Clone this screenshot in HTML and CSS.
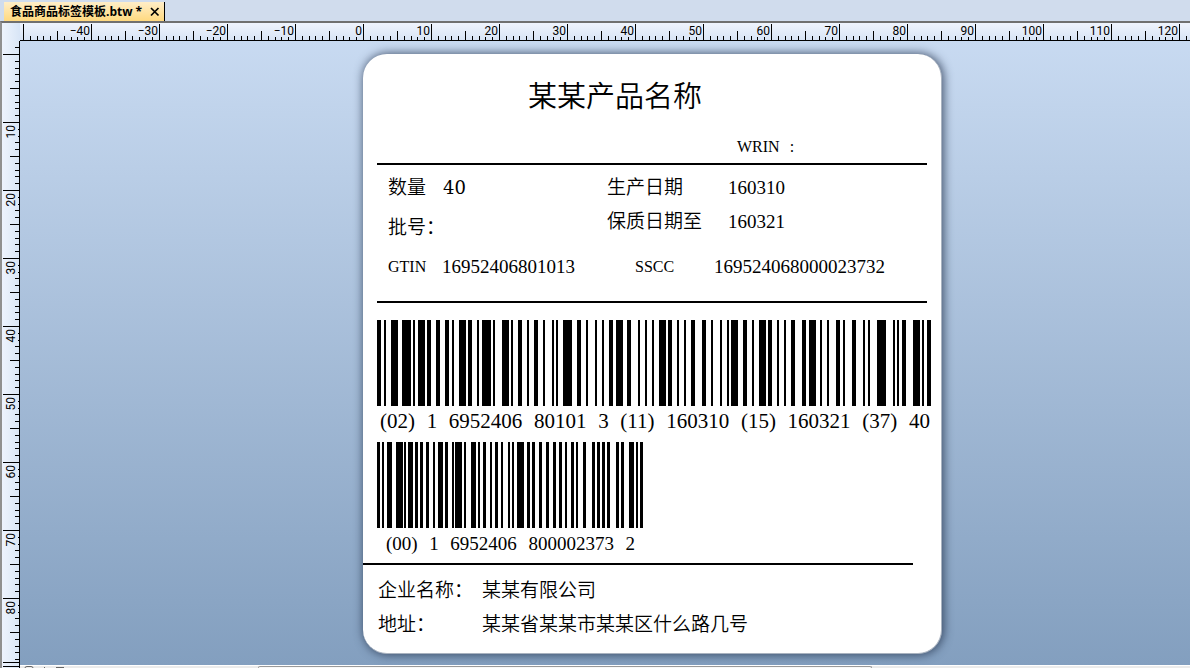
FILE: index.html
```html
<!DOCTYPE html>
<html lang="zh-CN">
<head>
<meta charset="utf-8">
<title>食品商品标签模板.btw</title>
<link rel="stylesheet" href="styles.css">
</head>
<body>
<div class="app">
  <header class="tabs">
    <div class="tab">
      <span class="tab-name">食品商品标签模板.btw *</span>
      <button class="tab-close" type="button" aria-label="关闭">
        <svg width="10" height="10" viewBox="0 0 10 10"><path d="M1 1 8.5 8.5M8.5 1 1 8.5" stroke="#000" stroke-width="1.7" fill="none"/></svg>
      </button>
    </div>
  </header>
  <main class="workspace">
    <div class="corner"></div>
    <svg class="ruler ruler-x" id="ruler-x" aria-hidden="true"></svg>
    <svg class="ruler ruler-y" id="ruler-y" aria-hidden="true"></svg>
    <div class="canvas">
      <article class="label">
        <h1 class="title">某某产品名称</h1>
        <p class="wrin"><span>WRIN</span><span>:</span></p>
        <hr class="rule">
        <div class="details">
          <dl class="fields fields-left">
            <div class="field"><dt>数量</dt><dd class="quantity">40</dd></div>
            <div class="field"><dt>批号：</dt><dd></dd></div>
          </dl>
          <dl class="fields fields-right">
            <div class="field"><dt>生产日期</dt><dd>160310</dd></div>
            <div class="field"><dt>保质日期至</dt><dd>160321</dd></div>
          </dl>
        </div>
        <dl class="codes">
          <div class="field gtin"><dt>GTIN</dt><dd>16952406801013</dd></div>
          <div class="field sscc"><dt>SSCC</dt><dd>169524068000023732</dd></div>
        </dl>
        <hr class="rule">
        <svg class="barcode barcode-item" data-code="021695240680101311160310151603213740" data-module="2.272" role="img" aria-label="GS1-128"></svg>
        <p class="readable readable-item"><span>(02)</span><span>1</span><span>6952406</span><span>80101</span><span>3</span><span>(11)</span><span>160310</span><span>(15)</span><span>160321</span><span>(37)</span><span>40</span></p>
        <svg class="barcode barcode-pallet" data-code="00169524068000023732" data-module="1.705" role="img" aria-label="GS1-128"></svg>
        <p class="readable readable-pallet"><span>(00)</span><span>1</span><span>6952406</span><span>800002373</span><span>2</span></p>
        <hr class="rule rule-wide">
        <dl class="company">
          <div class="field"><dt>企业名称：</dt><dd>某某有限公司</dd></div>
          <div class="field"><dt>地址：</dt><dd>某某省某某市某某区什么路几号</dd></div>
        </dl>
      </article>
    </div>
    <footer class="status">
      <svg class="status-icon" width="50" height="3" viewBox="0 0 50 3"><path d="M5 2Q5 .5 7 .5H11Q13 .5 13 2M24 1.5h1M36 1.5h8" fill="none" stroke="#666"/></svg>
      <div class="scroll-thumb"></div>
    </footer>
  </main>
</div>
<script src="script.js"></script>
</body>
</html>
```

FILE: styles.css
```css
* { box-sizing: border-box; }

body {
  margin: 0;
  background: #d0dced;
  color: #000;
  font-family: "Liberation Serif", "Noto Sans CJK SC", serif;
}

h1, p, dl, dd { margin: 0; }

.app {
  display: flex;
  flex-direction: column;
  min-height: 100vh;
  overflow: hidden;
}

.tabs {
  display: flex;
  height: 21px;
  padding: 2px 0 0 4px;
}

.tab {
  display: flex;
  align-items: center;
  gap: 8px;
  padding: 0 4px 0 6px;
  border-right: 1px solid #000;
  background: linear-gradient(#ffeec8, #ffd97f);
  font: bold 12px/18px "Open Sans", "Noto Sans CJK SC", sans-serif;
}

.tab-name { white-space: nowrap; }

.tab-close {
  display: flex;
  padding: 0;
  border: 0;
  background: none;
}

.workspace {
  flex: 1;
  display: grid;
  grid-template-columns: 18px minmax(0, 1fr);
  grid-template-rows: 18px minmax(0, 1fr) 3px;
  border-top: 2px solid #707070;
  border-left: 2px solid #909090;
}

.corner { background: linear-gradient(90deg, #eef4fd, #d8e5f6); }

.ruler {
  display: block;
  font: 12px Roboto, sans-serif;
}

.ruler-x {
  width: 100%;
  height: 18px;
  border-bottom: 1px solid #000;
  background: linear-gradient(#eff4fd, #d8e4f5);
}

.ruler-y {
  grid-row: 2 / 4;
  width: 18px;
  height: 100%;
  border-right: 1px solid #000;
  background: linear-gradient(90deg, #edf3fe, #dbe7f5);
}

.canvas {
  padding: 13px 0 11px 343px;
  background: linear-gradient(#c8daf1, #839fbf);
}

.label {
  width: 579px;
  padding: 23px 0 16px;
  border-right: 1px solid #a9b3c0;
  border-bottom: 1px solid #a9b3c0;
  border-radius: 24px;
  background: #fff;
  box-shadow: 1px 0 10px 1px rgba(35, 50, 75, 0.75);
  font-size: 19px;
  line-height: 24px;
}

.title {
  padding-left: 165px;
  font-size: 29px;
  font-weight: 350;
  line-height: 40px;
}

.wrin {
  display: flex;
  gap: 10px;
  margin: 18px 0 4px 374px;
  font-size: 16px;
}

.rule {
  width: 550px;
  height: 2px;
  margin: 0 0 0 14px;
  border: 0;
  background: #000;
}

.rule-wide { margin: 7px 0 0; }

.details {
  display: grid;
  grid-template-columns: 219px 1fr;
  padding: 11px 0 0 25px;
}

.field { display: flex; height: 24px; white-space: nowrap; }

.field dt { flex: none; font-weight: 350; }

.field dd { font-weight: 350; }

.fields { display: flex; flex-direction: column; }

.fields-left { gap: 16px; }

.fields-right { gap: 10px; }

.fields-left dt { width: 55px; }

.fields-right dt { width: 121px; }

.quantity { font-family: "DejaVu Serif", serif; font-size: 18px; }

.codes {
  display: grid;
  grid-template-columns: 247px 1fr;
  padding: 15px 0 22px 25px;
}

.codes dt { font-size: 16px; }

.gtin dt { width: 54px; }

.sscc dt { width: 79px; }

.barcode { display: block; height: 86px; margin-left: 14px; }

.barcode-item { width: 556px; margin-top: 17px; }

.barcode-pallet { width: 268px; margin-top: 9px; }

.readable { display: flex; justify-content: space-between; }

.readable-item { width: 550px; margin: 3px 0 0 17px; font-size: 21px; }

.readable-pallet { width: 249px; margin: 4px 0 0 23px; }

.company {
  display: flex;
  flex-direction: column;
  gap: 10px;
  padding: 14px 0 0 15px;
}

.company dt { width: 104px; }

.status {
  grid-column: 2;
  display: flex;
  background: #ebebeb;
  border-top: 1px solid #fff;
}

.status-icon { flex: none; margin-right: 188px; }

.scroll-thumb {
  width: 614px;
  border: 1px solid #999;
  border-bottom: 0;
  border-radius: 2px 2px 0 0;
  background: #f8f8f8;
}
```

FILE: script.js
```js
// Code 128 element widths, indexed by symbol value.
const CODE128 = (
  "212222 222122 222221 121223 121322 131222 122213 122312 132212 221213 " +
  "221312 231212 112232 122132 122231 113222 123122 123221 223211 221132 " +
  "221231 213212 223112 312131 311222 321122 321221 312212 322112 322211 " +
  "212123 212321 232121 111323 131123 131321 112313 132113 132311 211313 " +
  "231113 231311 112133 112331 132131 113123 113321 133121 313121 211331 " +
  "231131 213113 213311 213131 311123 311321 331121 312113 312311 332111 " +
  "314111 221411 431111 111224 111422 121124 121421 141122 141221 112214 " +
  "112412 122114 122411 142112 142211 241211 221114 413111 241112 134111 " +
  "111242 121142 121241 114212 124112 124211 411212 421112 421211 212141 " +
  "214121 412121 111143 111341 131141 114113 114311 411113 411311 113141 " +
  "114131 311141 411131 211412 211214 211232 2331112").split(" ");

const START_C = 105;
const FNC1 = 102;
const STOP = 106;

function drawBarcode(svg) {
  const size = Number(svg.dataset.module);
  const data = [FNC1, ...svg.dataset.code.match(/../g).map(Number)];
  const check = data.reduce((sum, v, i) => sum + v * (i + 1), START_C) % 103;
  const widths = [START_C, ...data, check, STOP].map(v => CODE128[v]).join("");
  let at = 0;
  let path = "";
  [...widths].forEach((w, i) => {
    if (i % 2 === 0) {
      const bar = Math.floor(w * size + 0.4);
      path += `M${Math.round(at * size)} 0h${bar}v86h-${bar}z`;
    }
    at += Number(w);
  });
  svg.innerHTML = `<path d="${path}"/>`;
}

const MM = 6.8;

function drawRulerX(svg, zero) {
  let out = "";
  const last = Math.floor((svg.clientWidth - zero) / MM);
  for (let i = -50; i <= last; i++) {
    const x = Math.round(zero + i * MM);
    const phase = ((i % 10) + 10) % 10;
    const next = i + 10 - phase;
    const covered = next > -50 && (phase > 7 || (phase === 7 && (next >= 100 || next < 0)));
    const len = phase === 0 ? 16 : phase === 5 ? 9 : covered ? 3 : 4;
    out += `<rect x="${x}" y="${17 - len}" width="1" height="${len}"/>`;
    if (phase === 0 && i > -50) {
      out += `<text x="${x - 1}" y="12" text-anchor="end">${i < 0 ? "−" + -i : i}</text>`;
    }
  }
  svg.innerHTML = out;
}

function drawRulerY(svg, zero) {
  let out = `<rect x="1" y="621" width="16" height="1"/>`;
  const last = Math.floor((svg.clientHeight - zero) / MM);
  for (let i = -1; i <= last; i++) {
    const y = Math.round(zero + i * MM);
    const phase = ((i % 10) + 10) % 10;
    const covered = i > 10 && (phase === 1 || phase === 2);
    const len = phase === 0 ? 16 : phase === 5 ? 9 : covered ? 1 : 4;
    out += `<rect x="${17 - len}" y="${y}" width="${len}" height="1"/>`;
    if (phase === 0 && i > 0 && y + 20 < svg.clientHeight) {
      out += `<text transform="translate(13 ${y + 3}) rotate(-90)" text-anchor="end">${i}</text>`;
    }
  }
  svg.innerHTML = out;
}

function drawRulers() {
  drawRulerX(document.getElementById("ruler-x"), 343);
  drawRulerY(document.getElementById("ruler-y"), 13);
}

document.querySelectorAll(".barcode").forEach(drawBarcode);
drawRulers();
window.addEventListener("resize", drawRulers);
```
